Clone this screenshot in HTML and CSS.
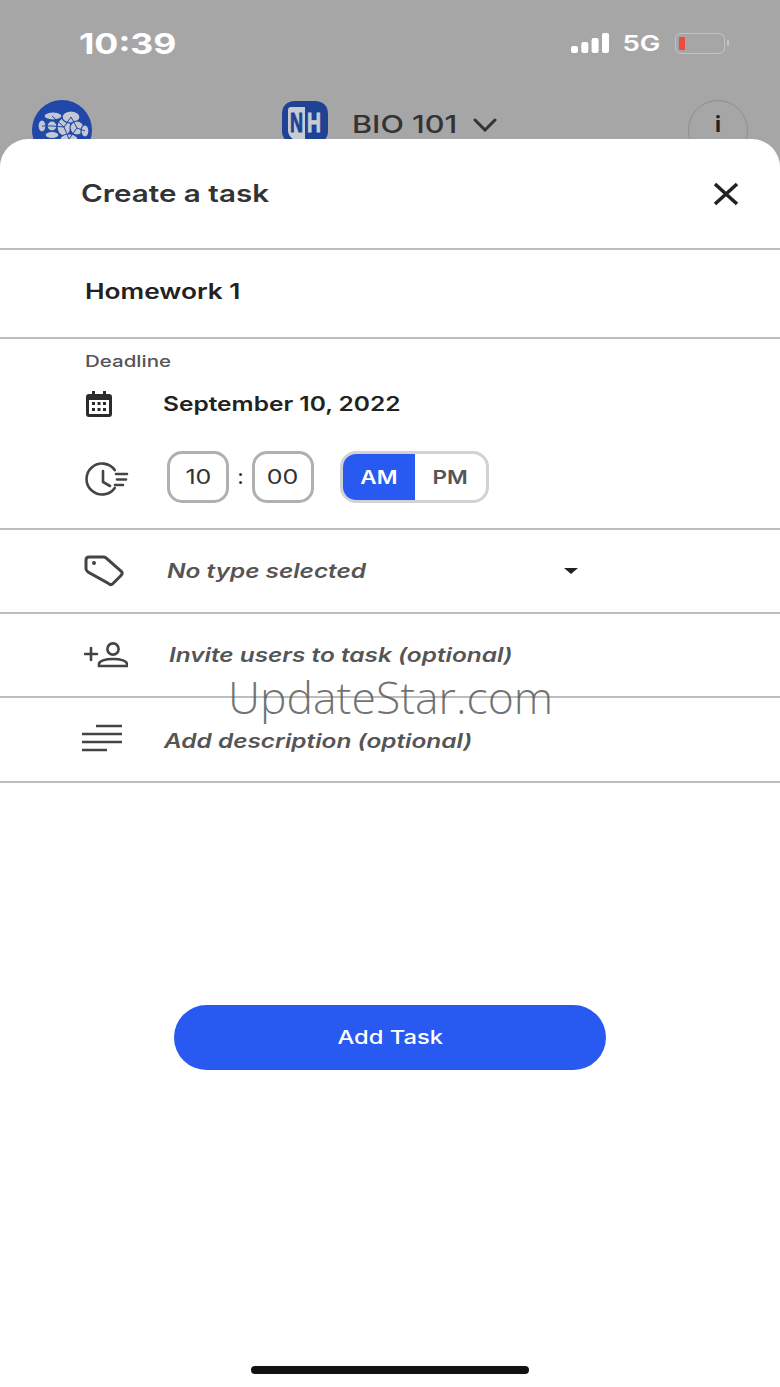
FILE: index.html
```html
<!DOCTYPE html>
<html lang="en">
<head>
    <meta charset="UTF-8">
    <meta name="viewport" content="width=device-width, initial-scale=1.0">
    <title>Create a task</title>
    <link rel="stylesheet" href="styles.css">
</head>
<body>
    <div class="backdrop">
        <div class="status-bar">
            <span class="clock wide">10:39</span>
            <div class="status-icons">
                <svg width="38" height="20" viewBox="0 0 38 20" fill="#fff">
                    <rect x="0" y="13" width="7" height="7" rx="2"/>
                    <rect x="10.3" y="9" width="7" height="11" rx="2"/>
                    <rect x="20.6" y="5" width="7" height="15" rx="2"/>
                    <rect x="31" y="0" width="7" height="20" rx="2"/>
                </svg>
                <span class="network wide">5G</span>
                <div class="battery">
                    <div class="battery-level"></div>
                </div>
            </div>
        </div>
        <div class="course-bar">
            <svg class="brain-logo" width="60" height="60" viewBox="0 0 60 60">
                <circle cx="30" cy="30" r="30" fill="#2148a8"/>
                <g fill="#c3c8d2" stroke="#2148a8" stroke-width="1.2">
                    <ellipse cx="10" cy="26" rx="4" ry="6"/>
                    <ellipse cx="21" cy="16" rx="9" ry="4"/>
                    <ellipse cx="20" cy="26" rx="5" ry="5"/>
                    <ellipse cx="20" cy="35" rx="7" ry="3.500"/>
                    <ellipse cx="32" cy="27" rx="7" ry="9"/>
                    <ellipse cx="39" cy="17" rx="9" ry="6"/>
                    <ellipse cx="45" cy="28" rx="7" ry="7"/>
                    <ellipse cx="37" cy="39" rx="9" ry="5"/>
                    <ellipse cx="53" cy="31" rx="4" ry="6"/>
                </g>
                <path d="M20 16l12 11 7-10 6 11-8 11-5-12-12-1M10 26l10 0M45 28l8 3" fill="none" stroke="#2148a8" stroke-width="1"/>
            </svg>
            <div class="course-name">
                <svg width="48" height="50" viewBox="0 0 48 50">
                    <path d="M14 1h20c8 0 13 5 13 13v18c0 9-13 17-23 18C14 49 1 41 1 32V14C1 6 6 1 14 1z" fill="#1f4295"/>
                    <path d="M7 10c0-2 1-3 3-3h14v38C16 43 7 37 7 31z" fill="#c7cbd3"/>
                    <text class="logo-letter" x="9" y="32" fill="#1f4295" stroke="#1f4295" textLength="13" lengthAdjust="spacingAndGlyphs">N</text>
                    <text class="logo-letter" x="26" y="32" fill="#c7cbd3" stroke="#c7cbd3" textLength="14" lengthAdjust="spacingAndGlyphs">H</text>
                </svg>
                <span class="course-title wide">BIO 101</span>
                <svg width="24" height="14" viewBox="0 0 24 14" fill="none" stroke="#333" stroke-width="3" stroke-linecap="round">
                    <path d="M2 2l10 10L22 2"/>
                </svg>
            </div>
            <div class="info-btn">i</div>
        </div>
    </div>

    <div class="sheet">
        <div class="sheet-header">
            <h1 class="wide">Create a task</h1>
            <svg width="26" height="24" viewBox="0 0 26 24" fill="none" stroke="#222" stroke-width="3.6">
                <path d="M2 2l22 20M24 2L2 22"/>
            </svg>
        </div>

        <div class="task-name"><span class="wide">Homework 1</span></div>

        <div class="deadline">
            <div class="deadline-label wide">Deadline</div>
            <div class="date-row">
                <svg width="28" height="26" viewBox="0 0 28 26">
                    <path d="M7 0h3v3h8V0h3v3h3c2 0 3 1 3 3v17c0 2-1 3-3 3H4c-2 0-3-1-3-3V6c0-2 1-3 3-3h3z" fill="#2b2b2b"/>
                    <rect x="4" y="9" width="20" height="14" fill="#fff"/>
                    <g fill="#2b2b2b">
                        <rect x="7" y="11" width="3" height="3"/>
                        <rect x="12.5" y="11" width="3" height="3"/>
                        <rect x="18" y="11" width="3" height="3"/>
                        <rect x="7" y="17" width="3" height="3"/>
                        <rect x="12.5" y="17" width="3" height="3"/>
                        <rect x="18" y="17" width="3" height="3"/>
                    </g>
                </svg>
                <span class="date-text wide">September 10, 2022</span>
            </div>
            <div class="time-row">
                <svg class="clock-icon" width="44" height="34" viewBox="0 0 44 34" fill="none" stroke="#444" stroke-width="2.6" stroke-linecap="round">
                    <path d="M29.7 8.1A15.5 15.5 0 1 0 29.7 25.9"/>
                    <path d="M18 9v11l7 4"/>
                    <path d="M31 12h11M32 17.5h9M30 23h8"/>
                </svg>
                <div class="time-box"><span class="wide-center">10</span></div>
                <span class="time-colon">:</span>
                <div class="time-box"><span class="wide-center">00</span></div>
                <div class="meridiem">
                    <div class="meridiem-on"><span class="wide-center">AM</span></div>
                    <div class="meridiem-off"><span class="wide-center">PM</span></div>
                </div>
            </div>
        </div>

        <div class="row row-type">
            <svg width="40" height="32" viewBox="0 0 40 32" fill="none" stroke="#444" stroke-width="3">
                <path d="M5 2h14c1 0 2 0 3 1l15 13c1.500 1.500 1.500 3 0 4.500l-8 8c-1.500 1.500-3 1.500-4.500 0L4 17c-1-1-2-2-2-3V5c0-2 1-3 3-3z"/>
                <circle cx="10" cy="8" r="2" fill="#444" stroke="none"/>
            </svg>
            <span class="row-text wide">No type selected</span>
            <span class="caret"></span>
        </div>

        <div class="row row-invite">
            <svg width="44" height="26" viewBox="0 0 44 26" fill="none" stroke="#444" stroke-width="2.6" stroke-linecap="round">
                <path d="M1 12h12M7 6v12"/>
                <circle cx="29" cy="7" r="5.6"/>
                <path d="M15 24v-2c0-3 6-5 14-5s14 2 14 5v2z"/>
            </svg>
            <span class="row-text wide">Invite users to task (optional)</span>
        </div>

        <div class="row row-description">
            <svg width="40" height="28" viewBox="0 0 40 28" fill="none" stroke="#444" stroke-width="2.4">
                <path d="M14 2h26M0 10h40M0 18h40M0 26h25"/>
            </svg>
            <span class="row-text wide">Add description (optional)</span>
        </div>

        <div class="actions">
            <button class="add-btn"><span class="wide-center">Add Task</span></button>
        </div>

        <div class="home-bar"></div>
    </div>

    <div class="watermark">UpdateStar.com</div>
</body>
</html>
```

FILE: styles.css
```css
* {
    box-sizing: border-box;
}

body {
    font-family: 'Inter', 'Liberation Sans', sans-serif;
    margin: 0;
    padding: 0;
    width: 780px;
    height: 1387px;
    overflow: hidden;
    position: relative;
    background-color: #a6a6a6;
    color: #222;
}

/* the screenshot is stretched sideways, so the type is too */
.wide,
.wide-center {
    display: inline-block;
    transform: scaleX(1.25);
    transform-origin: left center;
}

.wide-center {
    transform-origin: center;
}

.backdrop {
    height: 139px;
    overflow: hidden;
}

.status-bar {
    display: flex;
    justify-content: space-between;
    align-items: center;
    height: 42px;
    margin-top: 22px;
    padding: 0 55px 0 79px;
    color: #fff;
}

.clock {
    font-size: 28.500px;
    font-weight: 700;
}

.status-icons {
    display: flex;
    align-items: center;
    gap: 14px;
}

.network {
    margin: 0 1px 0 7px;
    font-size: 22px;
    font-weight: 600;
    transform-origin: right center;
}

.battery {
    width: 50px;
    height: 21px;
    border: 1.5px solid #c4c4c4;
    border-radius: 6px;
    padding: 3px;
    position: relative;
}

.battery::after {
    content: "";
    position: absolute;
    right: -5px;
    top: 6px;
    width: 2px;
    height: 6px;
    background-color: #c4c4c4;
}

.battery-level {
    width: 6px;
    height: 100%;
    border-radius: 1px;
    background-color: #ee4b3e;
}

.course-bar {
    display: flex;
    justify-content: space-between;
    height: 60px;
    margin-top: 36px;
    padding: 0 32px;
}

.course-name {
    display: flex;
    align-items: center;
    height: 50px;
    margin-left: -2px;
}

.logo-letter {
    font-family: 'Liberation Sans', sans-serif;
    font-size: 27px;
    font-weight: 700;
    stroke-width: 0.9px;
}

.course-title {
    margin-left: 23px;
    margin-right: 37px;
    font-size: 24.500px;
    line-height: 1.2;
    font-weight: 500;
    color: #333;
}

.info-btn {
    width: 60px;
    height: 60px;
    border: 1.5px solid #8e8e8e;
    border-radius: 50%;
    text-align: center;
    line-height: 46px;
    font-size: 22px;
    font-weight: 700;
    color: #222;
}

.sheet {
    height: 1248px;
    background-color: #fff;
    border-radius: 28px 28px 0 0;
    display: flex;
    flex-direction: column;
}

.sheet-header {
    display: flex;
    justify-content: space-between;
    align-items: center;
    height: 111px;
    padding: 0 41px 0 81px;
    border-bottom: 2px solid #bdbdbd;
}

h1 {
    margin: 0;
    font-size: 23.700px;
    font-weight: 600;
    color: #333;
}

.task-name {
    display: flex;
    align-items: center;
    height: 89px;
    padding: 0 0 4px 85px;
    font-size: 21px;
    font-weight: 600;
    border-bottom: 2px solid #bdbdbd;
}

.deadline {
    height: 191px;
    padding: 12px 0 0 85px;
    border-bottom: 2px solid #bdbdbd;
}

.deadline-label {
    font-size: 16.400px;
    font-weight: 500;
    color: #555;
}

.date-row {
    display: flex;
    align-items: center;
    margin-top: 20px;
}

.date-text {
    margin-left: 50px;
    font-size: 19.600px;
    font-weight: 600;
}

.time-row {
    display: flex;
    align-items: center;
    margin-top: 34px;
}

.time-box {
    width: 62px;
    height: 52px;
    border: 3px solid #b0b0b0;
    border-radius: 15px;
    font-size: 20px;
    line-height: 46px;
    text-align: center;
    color: #333;
}

.clock-icon {
    margin: 4px 38px 0 0;
}

.time-colon {
    width: 23px;
    text-align: center;
    font-size: 20px;
    font-weight: 500;
}

.meridiem {
    display: flex;
    width: 149px;
    height: 52px;
    margin-left: 26px;
    border: 3px solid #d2d2d2;
    border-radius: 16px;
    overflow: hidden;
    font-size: 18px;
    font-weight: 600;
}

.meridiem-on,
.meridiem-off {
    display: flex;
    align-items: center;
    justify-content: center;
}

.meridiem-on {
    width: 72px;
    background-color: #2859f0;
    color: #fff;
}

.meridiem-off {
    flex: 1;
    color: #555;
}

.row {
    display: flex;
    align-items: center;
    border-bottom: 2px solid #bdbdbd;
}

.row-text {
    font-size: 19.500px;
    font-style: italic;
    font-weight: 600;
    color: #555;
}

.row-type {
    height: 84px;
    padding-left: 84px;
}

.row-type .row-text {
    margin-left: 43px;
}

.caret {
    margin-left: 238px;
    border-left: 7px solid transparent;
    border-right: 7px solid transparent;
    border-top: 6px solid #222;
}

.row-invite {
    height: 84px;
    padding-left: 84px;
}

.row-invite .row-text {
    margin-left: 41px;
}

.row-description {
    height: 85px;
    padding-left: 82px;
}

.row-description svg {
    margin-top: -3px;
}

.row-description .row-text {
    margin: 3px 0 0 42px;
}

.actions {
    display: flex;
    justify-content: center;
    margin-top: 222px;
}

.add-btn {
    width: 432px;
    height: 65px;
    padding: 0;
    border: none;
    border-radius: 33px;
    background-color: #2859f0;
    color: #fff;
    font-family: inherit;
    font-size: 19px;
    font-weight: 500;
}

.home-bar {
    align-self: center;
    width: 278px;
    height: 8px;
    margin-top: 296px;
    border-radius: 4px;
    background-color: #111;
}

/* stamp over the page, not part of the layout */
.watermark {
    position: absolute;
    left: 228px;
    top: 670px;
    font-family: 'Open Sans', 'Liberation Sans', sans-serif;
    font-size: 44.500px;
    font-weight: 300;
    line-height: 54px;
    color: rgba(90, 90, 90, 0.85);
    white-space: nowrap;
}
```
